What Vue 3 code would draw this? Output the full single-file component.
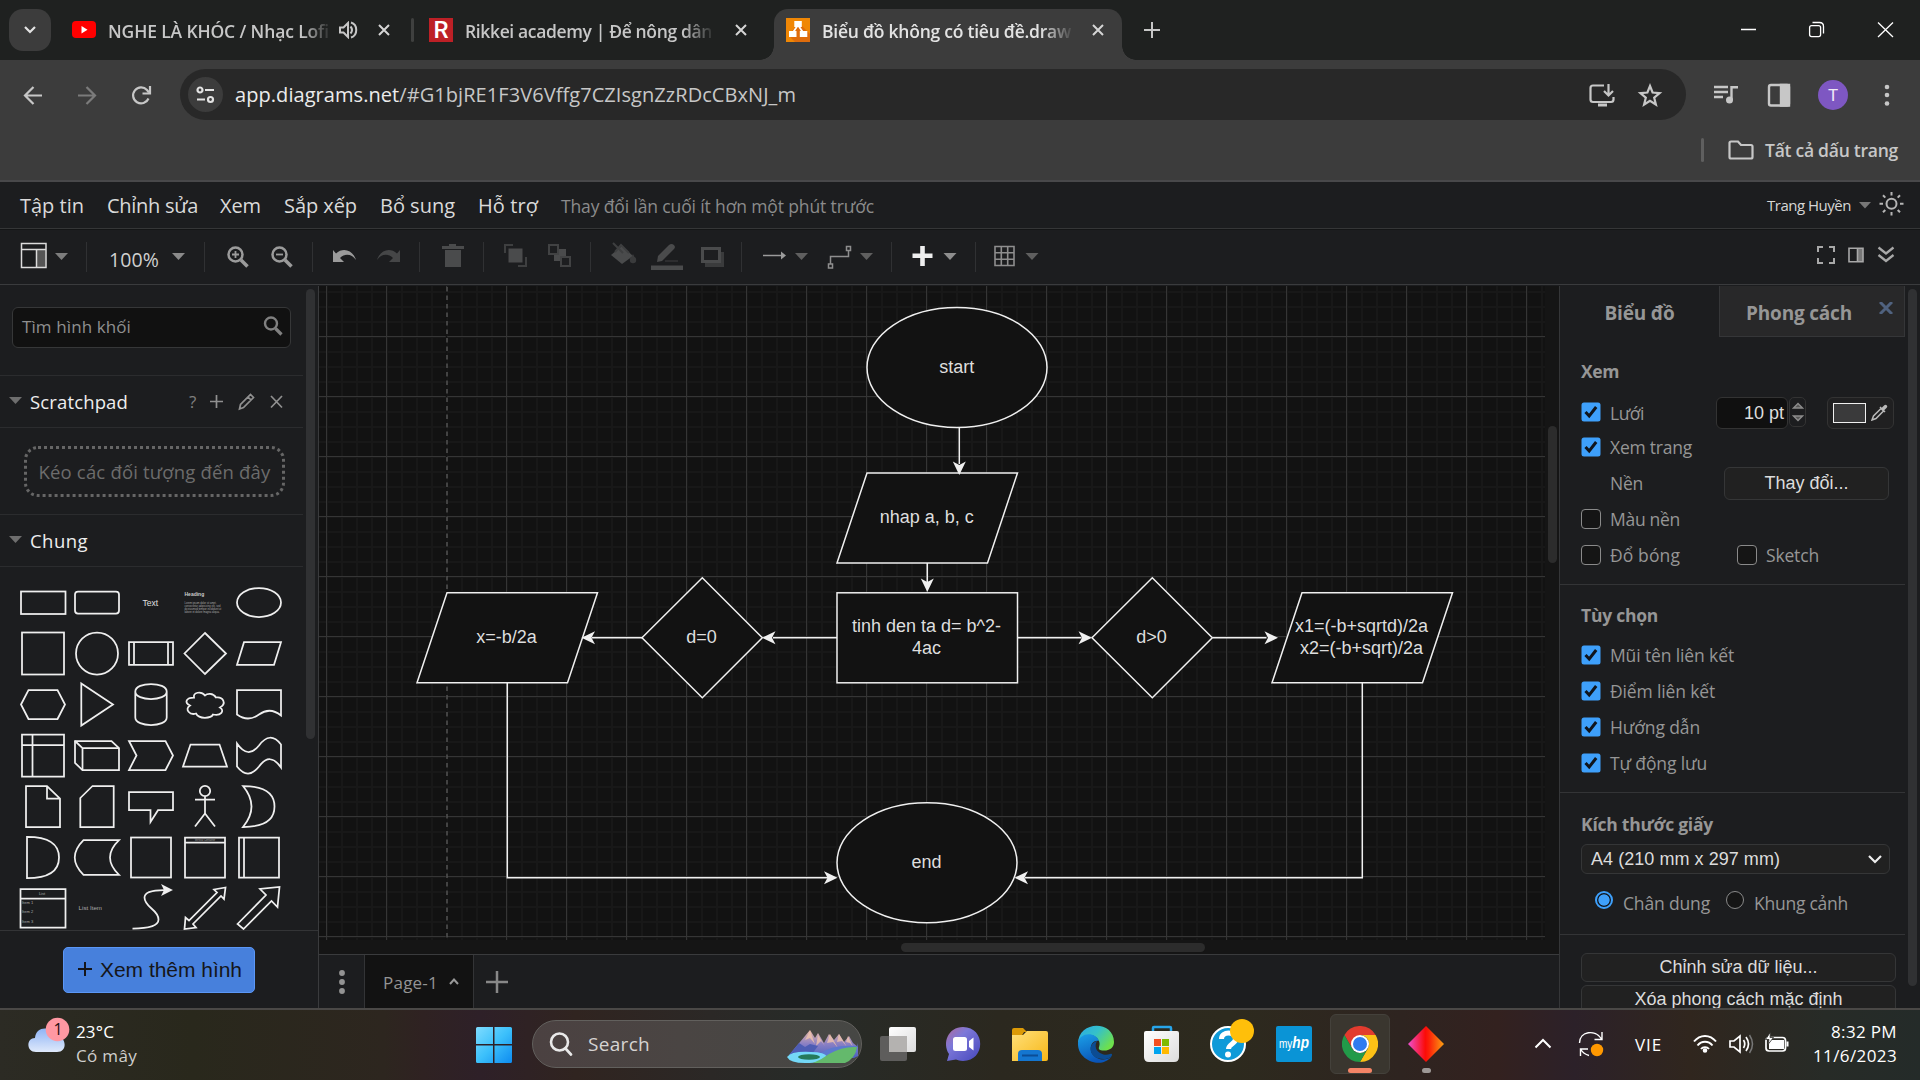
<script setup>
// Spreads the letters of a label so that it fills the given width.
const vFit = {
  mounted(el, { value }) {
    const n = Array.from(el.textContent.trim()).length
    const w = el.getBoundingClientRect().width
    el.style.letterSpacing = (value - w) / n + 'px'
  }
}

const menus = [
  { t: 'Tập tin', w: 64, g: 23 },
  { t: 'Chỉnh sửa', w: 91, g: 22 },
  { t: 'Xem', w: 41, g: 23 },
  { t: 'Sắp xếp', w: 73, g: 23 },
  { t: 'Bổ sung', w: 75, g: 23 },
  { t: 'Hỗ trợ', w: 60, g: 23 }
]

// Each toolbar slot spans [x, x + w); its drawing shares the bar's coordinates.
const tri = (x, c = '#7d7d7d') => `<path d="M${x} 253h13l-6.500 7z" fill="${c}"/>`
const sep = x => `<path d="M${x}.500 242v30" stroke="#303133"/>`
const lens = (x, plus) =>
  `<g fill="none" stroke="#9b9b9b"><circle cx="${x + 8.5}" cy="254.500" r="7" stroke-width="2.500"/><path d="M${x + 14} 260l6.500 6.500" stroke-width="3.500"/><path d="M${x + 5} 254.500h7${plus ? `M${x + 8.5} 251v7` : ''}" stroke-width="1.800"/></g>`
const leftTools = [
  { x: 0, w: 88, g: `<g fill="none" stroke="#dcdcdc" stroke-width="1.500"><rect x="36.500" y="250" width="9" height="17.500" fill="#555" stroke="none"/><rect x="21.500" y="243.500" width="24.500" height="24"/><path d="M21.500 249.500H46M36.500 249.500v18"/></g>` + tri(55) + sep(86) },
  { x: 172, w: 40, g: tri(172, '#8a8a8a') + sep(204) },
  { x: 212, w: 104, g: lens(227, true) + lens(271, false) + sep(312) },
  { x: 316, w: 108, g: `<path d="M333 250v12h11l-4-4c5-5 12-4 16 2-3-10-13-13-20-6.500z" fill="#9b9b9b"/><path d="M400 250v12h-11l4-4c-5-5-12-4-16 2 3-10 13-13 20-6.500z" fill="#454647"/>` + sep(419) },
  { x: 424, w: 60, g: `<path d="M442 246h7v-2h7v2h8v3h-22zM445 250h16v17h-16z" fill="#4a4b4c"/>` + sep(483) },
  { x: 484, w: 108, g: `<rect x="508.500" y="248.500" width="14" height="14" fill="#4a4b4c"/><path d="M513 245h-8v8M526 257v9h-8" fill="none" stroke="#3e3f40" stroke-width="2"/><path d="M554 249h12v12h-12z" fill="#4a4b4c"/><path d="M549 245h9v9h-9zM561 257h9v9h-9z" fill="#1d1e20" stroke="#414243" stroke-width="2"/>` + sep(590) },
  { x: 592, w: 152, g: `<g fill="#4a4b4c"><path d="M622 246l11 10-11 8-11-9z"/><path d="M613 243l10 10M615 252l6-7 8 8" fill="none" stroke="#3e3f40" stroke-width="2"/><circle cx="633" cy="260" r="3.200" fill="#3a3b3c"/><path d="M633 254l2.500 5h-5z" fill="#3a3b3c"/><path d="M657 262l1-6 11-11c3-3 8 1 5 4l-12 12z"/><path d="M665 261h13" stroke="#3e3f40"/><rect x="651" y="265.500" width="32" height="4.500"/><path d="M705 252h19v15h-19z" fill="#3a3b3c"/><rect x="702.500" y="248.500" width="17" height="13" fill="#1d1e20" stroke="#4a4b4c" stroke-width="3"/></g>` + sep(741) },
  { x: 744, w: 150, g: `<path d="M763 255.500h19" stroke="#9b9b9b" stroke-width="1.500"/><path d="M781 251.500l5 4-5 4z" fill="#9b9b9b"/>` + tri(795, '#5f5f5f') + `<path d="M830.500 264v-7.500h18V250M828.500 264h4v4h-4zM846.500 246.500h4v4h-4z" fill="none" stroke="#8e8e8e" stroke-width="1.500"/>` + tri(860, '#5f5f5f') + sep(891) },
  { x: 894, w: 84, g: `<path d="M922.500 246v20M912.500 255.800h20" stroke="#eee" stroke-width="4.600"/>` + tri(943.5, '#8e8e8e') + sep(975) },
  { x: 978, w: 62, g: `<path d="M995 246.500h19v19h-19zM1001.300 246.500v19M1007.700 246.500v19M995 252.800h19M995 259.200h19" fill="none" stroke="#8e8e8e" stroke-width="1.600"/>` + tri(1025.5, '#5f5f5f') }
]

// Palette miniatures, each centred on its own cell.
const poly = p => `<polygon points="${p}"/>`
const tiny = (x, y, s, t, a = 'start') => `<text x="${x}" y="${y}" font-size="${s}" text-anchor="${a}" fill="#aaa" stroke="none">${t}</text>`
const shapes = [
  '<rect x="-22" y="-11" width="44.500" height="22.500"/>',
  '<rect x="-22" y="-11" width="44" height="22" rx="3"/>',
  '<text x="-0.800" y="3" font-size="8.500" text-anchor="middle" fill="#e0e0e0" stroke="none">Text</text>',
  '<text x="-20.500" y="-6.500" font-size="5" font-weight="700" fill="#ccc" stroke="none">Heading</text>' +
    tiny(-20.5, 1, 2.6, 'Lorem ipsum dolor sit amet,') + tiny(-20.5, 4, 2.6, 'consectetur adipisicing elit, sed') + tiny(-20.5, 7, 2.6, 'do eiusmod tempor incididunt ut') + tiny(-20.5, 10.5, 2.6, 'labore et dolore magna aliqua.'),
  '<ellipse rx="22" ry="14.500"/>',
  '<rect x="-21" y="-21" width="42" height="42"/>',
  '<circle r="21"/>',
  '<path d="M-22-11.300H22V11.300H-22zM-17-11.300v22.600M17-11.300v22.600"/>',
  poly('0,-20.500 21,0 0,20.500 -20.500,0'),
  poly('-22,11.300 -15,-11.300 22,-11.300 15,11.300'),
  poly('-22,0 -14.500,-14.500 14.500,-14.500 22,0 14.500,14.500 -14.500,14.500'),
  poly('-15.700,-21 16,0 -15.700,21'),
  '<path d="M-15.700-13v26c0 10 31.400 10 31.400 0v-26c0-10-31.400-10-31.400 0c0 10 31.400 10 31.400 0"/>',
  '<path d="M-11-7C-19-7-21-2-15 1C-21 5-15 11-9 9C-6 15 6 14 8 10C16 12 20 6 15 3C22-1 18-8 11-7C8-12 2-11 0-9C-4-14-12-12-11-7z"/>',
  '<path d="M-22-14.500H22V11Q11 2 0 10Q-11 18-22 10z"/>',
  '<path d="M-21-21h42v42h-42zM-10.500-21v42M-21-10.500h42"/>',
  '<path d="M-22-14.500H14.500L22-7.300V14.700H-14.500L-22 7.500z"/><path d="M-22-14.500L-14.500-7.300H22M-14.500-7.300V14.700"/>',
  poly('-22,-14.500 14.500,-14.500 22,0 14.500,14.500 -22,14.500 -14.500,0'),
  poly('-22,11 -14.500,-11 14.500,-11 22,11'),
  '<path d="M-22-12Q-11 4 0-10Q11-25 22-11V12Q11-4 0 11Q-11 25-22 11z"/>',
  '<path d="M-17-20.500H4L17-8V20.500H-17zM4-20.500V-8H17"/>',
  poly('-16.700,-8.500 -4.500,-20.500 16.700,-20.500 16.700,20.500 -16.700,20.500'),
  poly('-22,-14.500 22,-14.500 22,3.700 7,3.700 -0.500,15.500 -0.500,3.700 -22,3.700'),
  '<circle cy="-15.500" r="5.200"/><path d="M0-10.300V7M-10-7H10M0 7L-10 20M0 7L10 20"/>',
  '<path d="M-16-20.500Q15.500-20.500 15.500 0Q15.500 20.500-16 20.500Q1 0-16-20.500z"/>',
  '<path d="M-16-20.700Q16-20.700 16 0Q16 20.700-16 20.700z"/>',
  '<path d="M22-17.300H-13.500Q-31 0-13.500 17.300H22Q4 0 22-17.300z"/>',
  '<rect x="-20" y="-20" width="40" height="40"/>',
  '<path d="M-20-20h40v40h-40zM-20-15h40"/>' + tiny(0, -16.2, 2.6, 'Vertical Container', 'middle'),
  '<path d="M-20-20h40v40h-40zM-15-20v40"/>',
  '<path d="M-22.500-19.500h45v38.500h-45zM-22.500-10h45"/>' + tiny(-1, -14, 4, 'List', 'middle') + tiny(-21, -4.5, 4, 'Item 1') + tiny(-21, 4.5, 4, 'Item 2') + tiny(-21, 14, 4, 'Item 3'),
  tiny(5, 1.2, 6.2, 'List Item', 'end'),
  '<path d="M-18.500 20C-5 20 7.500 18 7.500 11C7.500 1-6.500-1-6.500-11C-6.500-17 3-18.500 13-18.500"/><path d="M20-18.500L12-22.500L14-18.500L12-14.500z" fill="#f0f0f0"/>',
  poly('-20.500,20.500 -19.500,9 -16,12 12,-16 9,-19 20.500,-21 19,-9.500 16,-12.500 -12,15.500 -9,19'),
  poly('-21.500,15.500 7,-13.500 1,-19.500 20.500,-21.500 18.500,-1.500 12.500,-7.500 -15.500,20.500')
]

const heads = [
  [959.3, 475, 90], [927.3, 592, 90], [762, 637.8, 180], [581.5, 637.8, 180],
  [1092, 637.8, 0], [1278, 637.8, 0], [837.5, 877.8, 0], [1014.5, 877.8, 180]
]
const labels = [
  [956.7, 372.7, 'start'], [926.7, 523.2, 'nhap a, b, c'], [926.5, 632, 'tinh den ta d= b^2-'],
  [926.5, 654, '4ac'], [506.5, 643, 'x=-b/2a'], [701.5, 643, 'd=0'], [1151.5, 643, 'd>0'],
  [1361.5, 632, 'x1=(-b+sqrtd)/2a'], [1361.5, 654, 'x2=(-b+sqrt)/2a'], [926.5, 868, 'end']
]

const options = [
  { t: 'Mũi tên liên kết', w: 124 },
  { t: 'Điểm liên kết', w: 105 },
  { t: 'Hướng dẫn', w: 90 },
  { t: 'Tự động lưu', w: 97 }
]
const tick = 'M4.500 10l3.700 4 7-9'
</script>

<template>
  <div class="screen">
    <!-- Browser tabs -->
    <header class="tabstrip">
      <div class="tabsearch"><svg width="12" height="8" viewBox="0 0 12 8"><path d="M1 1l5 5 5-5" fill="none" stroke="#e3e3e3" stroke-width="2.200" /></svg></div>
      <svg class="yt" width="24" height="18" viewBox="0 0 24 18"><rect width="24" height="17" rx="4" fill="#f00" /><path d="M9.500 5v7.500l6-3.700z" fill="#fff" /></svg>
      <span class="tabtext fade" v-fit="221">NGHE LÀ KHÓC / Nhạc Lofi</span>
      <svg class="audio" width="20" height="18" viewBox="0 0 20 18"><path d="M1 6.500h3.500L9 2v14l-4.500-4.500H1zM11.500 5.500q3 3.500 0 7M12 1.500c7 2 7 13 0 15" fill="none" stroke="#c7c7c7" stroke-width="2" /></svg>
      <svg class="x g19" width="12" height="12" viewBox="0 0 12 12"><path d="M1 1l10 10M11 1L1 11" /></svg>
      <i class="tabsep"></i>
      <span class="rikkei">R</span>
      <span class="tabtext fade" v-fit="247">Rikkei academy | Để nông dân</span>
      <svg class="x g23" width="12" height="12" viewBox="0 0 12 12"><path d="M1 1l10 10M11 1L1 11" /></svg>
      <div class="activetab">
        <svg width="24" height="24" viewBox="0 0 24 24"><path d="M0 0h24v24H0z" fill="#f08705" /><path d="M12 4l12 12v8H9l-6-6z" fill="#df6c0c" /><path d="M12 7L6 16M12 7l6 9" stroke="#fff" stroke-width="1.800" /><path d="M8.300 3h7.500v6H8.300zM3 13h7.500v6H3zM13.800 13h7.500v6h-7.500z" fill="#fff" /></svg>
        <span class="tabtext fade on" v-fit="249">Biểu đồ không có tiêu đề.draw</span>
        <svg class="x g21" width="12" height="12" viewBox="0 0 12 12"><path d="M1 1l10 10M11 1L1 11" /></svg>
      </div>
      <svg class="newtab" width="16" height="16" viewBox="0 0 16 16"><path d="M8 0v16M0 8h16" stroke="#c7c7c7" stroke-width="2" /></svg>
      <svg class="win" width="160" height="20" viewBox="1737 20 160 20"><g fill="none" stroke="#fff" stroke-width="1.300"><path d="M1741 29.500h15M1878 22.500l15 14.500M1893 22.500l-15 14.500M1812.500 22.500h7q4 0 4 4v7" /><rect x="1809.600" y="25.600" width="11" height="11" rx="2" /></g></svg>
    </header>

    <!-- Address bar -->
    <div class="navbar">
      <svg class="nav" width="130" height="24" viewBox="22 82 130 24"><g fill="none" stroke="#c7c7c7" stroke-width="2.200"><path d="M42 94.500H26M33.500 86l-8.500 8.500 8.500 8.500" /><path d="M78 94.500h16M86.500 86l8.500 8.500-8.500 8.500" stroke="#7b7b7b" /><path d="M148.500 97.500a8 8 0 1 1-1.500-8.500l2 2.500" /><path d="M150 85v7.500h-7.500" /></g></svg>
      <div class="omnibox">
        <span class="site"><svg width="20" height="18" viewBox="0 0 20 18"><g fill="none" stroke="#e3e3e3" stroke-width="2.200"><circle cx="4" cy="4" r="2.500" /><path d="M9 4h9M1 13.500h8" /><circle cx="14.500" cy="13.500" r="2.500" /></g></svg></span>
        <span class="url" v-fit="561"><b>app.diagrams.net</b>/#G1bjRE1F3V6Vffg7CZIsgnZzRDcCBxNJ_m</span>
        <svg class="omni-icons" width="76" height="26" viewBox="1588 81 76 26"><g fill="none" stroke="#c7c7c7" stroke-width="2.200"><path d="M1604 84.500h-11q-2.500 0-2.500 2.500v11.500q0 2.500 2.500 2.500h18q2.500 0 2.500-2.500V96M1608.500 83v11M1604 90l4.500 4.500 4.500-4.500" /><path d="M1598 104h9" stroke-width="3" /><path d="M1650 85l2.600 6.500 7 .6-5.400 4.600 1.700 6.800-5.900-3.700-5.900 3.700 1.700-6.800-5.400-4.600 7-.6z" stroke-linejoin="miter" /></g></svg>
      </div>
      <svg class="ext" width="78" height="26" viewBox="1713 81 78 26"><g fill="none" stroke="#c7c7c7" stroke-width="2.400"><path d="M1714 86h14M1714 91h14M1714 96h9M1738 86.200h-6.500V99" /><circle cx="1729.500" cy="99" r="3.500" fill="#c7c7c7" stroke="none" /><rect x="1769" y="84" width="20" height="20.500" rx="2" /><path d="M1781 84h8v20.500h-8z" fill="#c7c7c7" /></g></svg>
      <span class="avatar">T</span>
      <svg class="kebab" width="6" height="24" viewBox="0 0 6 24"><g fill="#c7c7c7"><circle cx="3" cy="4" r="2.300" /><circle cx="3" cy="12" r="2.300" /><circle cx="3" cy="20.500" r="2.300" /></g></svg>
    </div>
    <div class="bookmarks">
      <i></i>
      <svg width="26" height="20" viewBox="0 0 26 20"><path d="M3 1.500h7l3 3.500h10q1.500 0 1.500 1.500v10.500q0 1.500-1.500 1.500H3q-1.500 0-1.500-1.500V3q0-1.500 1.500-1.500z" fill="none" stroke="#c7c7c7" stroke-width="2.200" /></svg>
      <span v-fit="133">Tất cả dấu trang</span>
    </div>

    <!-- Editor menu -->
    <div class="menubar">
      <span v-for="m in menus" :key="m.t" class="menu" v-fit="m.w" :style="{ marginRight: m.g + 'px' }">{{ m.t }}</span>
      <span class="status" v-fit="313">Thay đổi lần cuối ít hơn một phút trước</span>
      <span class="user" v-fit="84">Trang Huyền</span>
      <svg class="usermenu" width="48" height="26" viewBox="1857 191 48 26"><path d="M1859 202h12l-6 6.500z" fill="#777" /><g fill="none" stroke="#b5b5b5" stroke-width="2"><circle cx="1891.500" cy="203.800" r="5" /><path d="M1891.500 192v3.500M1891.500 212v3.500M1879.500 203.800h3.500M1900 203.800h3.500M1883 195.300l2.300 2.300M1897.700 210l2.300 2.300M1900 195.300l-2.300 2.300M1885.300 210l-2.300 2.300" /></g></svg>
    </div>
    <div class="toolbar">
      <svg :width="88" height="55" viewBox="0 229 88 55" v-html="leftTools[0].g"></svg>
      <span class="zoomlevel" v-fit="50">100%</span>
      <svg v-for="s in leftTools.slice(1)" :key="s.x" :width="s.w" height="55" :viewBox="`${s.x} 229 ${s.w} 55`" v-html="s.g"></svg>
      <svg class="view" width="80" height="55" viewBox="1815 229 80 55"><g fill="none" stroke="#a8a8a8" stroke-width="2"><path d="M1818 252v-5h5M1829 247h5v5M1834 258v5h-5M1823 263h-5v-5" /><path d="M1858 248h5v14h-5z" fill="#777" stroke="none" /><path d="M1849 248.200h14v13.600h-14zM1857.500 248v14" stroke-width="1.600" /><path d="M1878.500 247.500l7.500 6 7.500-6M1878.500 255l7.500 6 7.500-6" stroke-width="2.300" /></g></svg>
    </div>

    <main class="main">
      <!-- Shape library -->
      <aside class="sidebar">
        <div class="lib">
          <div class="liblist">
            <div class="searchrow"><div class="search">
              <span v-fit="109">Tìm hình khối</span>
              <svg width="20" height="20" viewBox="0 0 20 20"><g fill="none" stroke="#808080"><circle cx="8" cy="7.500" r="6" stroke-width="2.400" /><path d="M12.500 12.500l6 6" stroke-width="3.200" /></g></svg>
            </div></div>
            <div class="libhead pad">
              <svg class="tri" width="13" height="8" viewBox="0 0 13 8"><path d="M0 0h13L6.500 7z" /></svg>
              <span v-fit="98">Scratchpad</span>
              <em>?</em>
              <svg class="headicons" width="74" height="20" viewBox="209 392 74 20"><g fill="none" stroke="#909090" stroke-width="1.700"><path d="M216.500 395v13M210 401.500h13M271 396l11 11.500M282 396l-11 11.500M239.500 409l1-4.500 10-10 3 3-10 10zM248 397l3 3" /></g></svg>
            </div>
            <div class="drop"><div class="dropbox"><span v-fit="232">Kéo các đối tượng đến đây</span></div></div>
            <div class="libhead chung">
              <svg class="tri" width="13" height="8" viewBox="0 0 13 8"><path d="M0 0h13L6.500 7z" /></svg>
              <span v-fit="58">Chung</span>
            </div>
            <div class="palette">
              <svg v-for="(s, i) in shapes" :key="i" width="54" height="51" viewBox="-27 -25.500 54 51" v-html="s"></svg>
            </div>
          </div>
          <div class="track"><i class="thumb"></i></div>
        </div>
        <div class="more"><button><svg width="14" height="14" viewBox="0 0 14 14"><path d="M7 0v14M0 7h14" stroke="#15161a" stroke-width="2" /></svg><span v-fit="142">Xem thêm hình</span></button></div>
      </aside>

      <!-- Drawing canvas -->
      <section class="center">
        <div class="canvasrow">
          <svg width="1226" height="654" viewBox="319 286 1226 654">
            <defs>
              <pattern id="minor" x="326" y="336" width="15" height="15" patternUnits="userSpaceOnUse"><path d="M0 0h2v15H0zM0 0h15v2H0z" fill="#181818" /></pattern>
              <pattern id="major" x="326" y="336" width="60" height="60" patternUnits="userSpaceOnUse"><path d="M0 0h1v60H0zM0 0h60v1H0z" fill="#353535" /></pattern>
            </defs>
            <rect x="319" y="286" width="1226" height="654" fill="#121212" />
            <rect x="319" y="286" width="1226" height="654" fill="url(#minor)" />
            <rect x="319" y="286" width="1226" height="654" fill="url(#major)" />
            <path d="M446.500 287V940" stroke="#121212" stroke-width="1.500" />
            <path d="M447 287V940" stroke="#5c5c5c" stroke-width="1.300" stroke-dasharray="4.500 4" />
            <g fill="#121212" stroke="#f0f0f0" stroke-width="1.500">
              <ellipse cx="957" cy="367.500" rx="90" ry="60" />
              <path d="M837 563l30-90h150.500l-30 90z" />
              <rect x="837" y="592.800" width="180.500" height="90" />
              <path d="M1092 637.800l60.300-60 60 60-60 60z" />
              <path d="M642 637.800l60.300-60 60 60-60 60z" />
              <path d="M1272 682.800l30-90h150.500l-30 90z" />
              <path d="M417 682.800l30-90h150.500l-30 90z" />
              <ellipse cx="927" cy="862.800" rx="90" ry="60" />
              <path d="M959.300 427.500V464M927.300 563v20M837 637.800h-64M642 637.800h-50M1017.500 637.800h64M1212.500 637.800h54M1362.300 682.800v195H1025M507.300 682.800v195H828" fill="none" />
            </g>
            <path v-for="(h, i) in heads" :key="i" d="M0 0L-13.500-6.500-10 0-13.500 6.500z" fill="#f0f0f0" :transform="`translate(${h[0]} ${h[1]}) rotate(${h[2]})`" />
            <g class="nodetext"><text v-for="l in labels" :key="l[2]" :x="l[0]" :y="l[1]">{{ l[2] }}</text></g>
          </svg>
          <div class="vtrack"><i></i></div>
        </div>
        <div class="htrack"><i></i></div>
        <footer class="pages">
          <span class="pmenu"><svg width="6" height="24" viewBox="0 0 6 24"><g fill="#939393"><circle cx="3" cy="3" r="2.900" /><circle cx="3" cy="12" r="2.900" /><circle cx="3" cy="21" r="2.900" /></g></svg></span>
          <span class="ptab"><span v-fit="55">Page-1</span><svg width="10" height="7" viewBox="0 0 10 7"><path d="M1 6l4-4.500L9 6" fill="none" stroke="#999" stroke-width="2" /></svg></span>
          <svg class="padd" width="22" height="22" viewBox="0 0 22 22"><path d="M11 0v22M0 11h22" stroke="#888" stroke-width="2.500" /></svg>
        </footer>
      </section>

      <!-- Format panel -->
      <aside class="format">
        <div class="fbody">
          <div class="ftabs">
            <span class="ft cur"><span v-fit="70">Biểu đồ</span></span>
            <span class="ft"><span v-fit="106">Phong cách</span></span>
            <span class="fx"><svg width="14" height="12" viewBox="0 0 14 12"><path d="M1 0l12 12M13 0L1 12" stroke="#50627f" stroke-width="3" /></svg></span>
          </div>
          <div class="sec view-sec">
            <h3><span v-fit="38">Xem</span></h3>
            <div class="row r1">
              <svg class="cb" width="20" height="20" viewBox="0 0 20 20"><rect x=".5" y=".5" width="19" height="19" rx="2.500" /><path :d="tick" /></svg>
              <span class="lab" v-fit="34">Lưới</span>
              <span class="num"><span v-fit="40">10 pt</span></span>
              <span class="spin"><svg width="12" height="22" viewBox="0 0 12 22"><path d="M1.500 7L6 2.500 10.500 7zM1.500 15L6 19.500 10.500 15z" fill="#555" stroke="#8c8c8c" stroke-width="1.300" /></svg></span>
              <span class="color"><i></i><svg width="17" height="17" viewBox="0 0 17 17"><g fill="none" stroke="#b9b9b9" stroke-width="1.500"><path d="M1 16l1.500-4L10 4.500 12.500 7 5 14.500zM9 3l5 5" /><path d="M12.500 4.500l2-2" stroke-width="3.400" stroke-linecap="round" /></g></svg></span>
            </div>
            <div class="row r2">
              <svg class="cb" width="20" height="20" viewBox="0 0 20 20"><rect x=".5" y=".5" width="19" height="19" rx="2.500" /><path :d="tick" /></svg>
              <span class="lab" v-fit="82">Xem trang</span>
            </div>
            <div class="row r3"><span class="lab nen" v-fit="33">Nền</span><span class="btn change"><span v-fit="84">Thay đổi...</span></span></div>
            <div class="row r4"><i class="off"></i><span class="lab" v-fit="70">Màu nền</span></div>
            <div class="row r5"><i class="off"></i><span class="lab" v-fit="70">Đổ bóng</span><i class="off second"></i><span class="lab" v-fit="53">Sketch</span></div>
          </div>
          <div class="sec opt-sec">
            <h3><span v-fit="77">Tùy chọn</span></h3>
            <div v-for="o in options" :key="o.t" class="row opt">
              <svg class="cb" width="20" height="20" viewBox="0 0 20 20"><rect x=".5" y=".5" width="19" height="19" rx="2.500" /><path :d="tick" /></svg>
              <span class="lab" v-fit="o.w">{{ o.t }}</span>
            </div>
          </div>
          <div class="sec paper-sec">
            <h3><span v-fit="132">Kích thước giấy</span></h3>
            <div class="select"><span v-fit="189">A4 (210 mm x 297 mm)</span><svg width="14" height="10" viewBox="0 0 14 10"><path d="M1 2l6 6 6-6" fill="none" stroke="#eee" stroke-width="2.200" /></svg></div>
            <div class="radios">
              <i class="radio sel"></i><span class="lab" v-fit="87">Chân dung</span>
              <i class="radio"></i><span class="lab" v-fit="94">Khung cảnh</span>
            </div>
          </div>
          <div class="btns">
            <span class="btn wide"><span v-fit="158">Chỉnh sửa dữ liệu...</span></span>
            <span class="btn wide"><span v-fit="208">Xóa phong cách mặc định</span></span>
          </div>
        </div>
        <div class="track ftrack"><i class="thumb"></i></div>
      </aside>
    </main>

    <!-- Desktop taskbar -->
    <footer class="taskbar">
      <svg class="weather" width="44" height="40" viewBox="28 1016 44 40">
        <defs><linearGradient id="cl" x1="0" y1="0" x2="0" y2="1"><stop offset="0" stop-color="#8fb4f5" /><stop offset="1" stop-color="#dfe9fb" /></linearGradient></defs>
        <path d="M36 1052c-10 0-10-14-1-14 1-12 16-12 19-3 12-1 15 17 3 17z" fill="url(#cl)" />
        <circle cx="57.500" cy="1029.500" r="11.800" fill="#ff98a2" /><text x="58" y="1035" font-size="16" text-anchor="middle" fill="#1c1010">1</text>
      </svg>
      <div class="wtext"><span v-fit="38">23°C</span><span class="dim" v-fit="61">Có mây</span></div>
      <svg class="start" width="36" height="36" viewBox="0 0 36 36"><defs><linearGradient id="wn" x1="0" y1="0" x2="1" y2="1"><stop offset="0" stop-color="#7fdcff" /><stop offset=".5" stop-color="#3cc0fb" /><stop offset="1" stop-color="#0d8bf0" /></linearGradient></defs><path d="M1.500 0H17v17H0V1.500Q0 0 1.500 0zM18.500 0H34.500Q36 0 36 1.500V17H18.500zM0 18.500h17V36H1.500Q0 36 0 34.500zM18.500 18.500H36V34.500Q36 36 34.500 36h-16z" fill="url(#wn)" /></svg>
      <div class="tsearch">
        <svg width="24" height="24" viewBox="0 0 24 24"><g fill="none" stroke="#e9e9e9" stroke-width="2.600"><circle cx="10.500" cy="10" r="8.500" /><path d="M16.500 16.500l5.500 6" stroke-linecap="round" /></g></svg>
        <span v-fit="62">Search</span>
        <svg class="pic" width="72" height="33" viewBox="0 0 72 33">
          <defs><linearGradient id="mt" x1="0" y1="0" x2="0" y2="1"><stop offset="0" stop-color="#e8b9a6" /><stop offset=".5" stop-color="#8a7fc4" /><stop offset="1" stop-color="#4b62c0" /></linearGradient></defs>
          <path d="M2 25L13 12l5-6 5-6 5 8 3-5 6 10 5-9 5 6 5-6 5 8 5-6 4 7 5 4v9l-4 2H24z" fill="url(#mt)" />
          <path d="M23 1l-5 9 5-2 5 6zM31 5l-2 11 5-5 4 5zM43 4l-3 9 6-1 5 6zM52 4l-2 8 5-1 5 6zM61 6l-2 6 4 1 3 4z" fill="#f3c6ac" opacity=".75" />
          <path d="M12 13L3 24h22l6-8-8-2-5 3z" fill="#4e5db4" />
          <path d="M32 24q14-10 38-8l1-3-1 9-20 10H12z" fill="#5c78cf" />
          <path d="M0 27q4-6 24-5 14 0 16 5-4 6-22 6Q3 33 0 27z" fill="#74d8f7" />
          <path d="M26 33q8-3 16-9 14-8 28-7-2 12-12 16z" fill="#64b96c" /><ellipse cx="22" cy="27" rx="11" ry="2.800" fill="#257a5a" />
        </svg>
      </div>
      <svg class="apps" width="466" height="56" viewBox="864 1017 466 56">
        <defs>
          <linearGradient id="tv" x1="0" y1="0" x2="1" y2="1"><stop offset="0" stop-color="#fff" /><stop offset="1" stop-color="#dcdcdc" /></linearGradient>
          <linearGradient id="ch" x1="0" y1="0" x2="1" y2="1"><stop offset="0" stop-color="#b06a9b" /><stop offset=".35" stop-color="#7d78d8" /><stop offset="1" stop-color="#4547bd" /></linearGradient>
          <linearGradient id="fo" x1="0" y1="0" x2="1" y2="1"><stop offset="0" stop-color="#ffe07a" /><stop offset="1" stop-color="#f7b718" /></linearGradient>
          <linearGradient id="ed" x1="0" y1="0" x2="1" y2=".6"><stop offset="0" stop-color="#2aa8e6" /><stop offset=".5" stop-color="#35c1c9" /><stop offset="1" stop-color="#6ee04c" /></linearGradient>
          <linearGradient id="eb" x1="0" y1="0" x2=".4" y2="1"><stop offset="0" stop-color="#1ba0e8" /><stop offset="1" stop-color="#0a55b8" /></linearGradient>
        </defs>
        <rect x="880" y="1036" width="27" height="25" rx="2" fill="#5e5d5c" /><rect x="889" y="1027" width="27" height="25" rx="2" fill="url(#tv)" /><path d="M889 1036h18v16h-18z" fill="#b4b2b0" />
        <path d="M963 1027c23 0 23 34 0 34-3 0-5-1-7-1.500l-9 1.500 2-7c-7-11-1-27 14-27z" fill="url(#ch)" /><rect x="953" y="1037" width="14" height="14" rx="2.500" fill="#fff" /><path d="M969 1041l4.500-3.500v13L969 1047z" fill="#fff" />
        <path d="M1012 1030q0-2 2-2h9l4 4h-3l-3 5h-9z" fill="#dc9a06" /><path d="M1012 1035h11l4-4h19q2 0 2 2v26q0 2-2 2h-34z" fill="url(#fo)" /><path d="M1018 1061v-7q0-4 4-4h16q4 0 4 4v7z" fill="#1476d0" /><path d="M1022 1055.500h16" stroke="#0b4d96" stroke-width="2" />
        <path d="M1078 1044c0-24 36-24 36-2 0 7-7 10-14 8-3-2 1-4-1-9-4-9-17-7-21 3z" fill="url(#ed)" /><path d="M1078 1044c0-12 18-13 21-3-9-2-12 12-2 17 6 3 11 1 14-1-9 12-33 4-33-13z" fill="url(#eb)" /><path d="M1097 1041c-8 2-9 13 0 17 6 2 11 1 14-1 2-3 1-4-1-3-8 3-18-4-13-13z" fill="#0c4c93" />
        <path d="M1153 1033v-5q0-1 1-1h16q1 0 1 1v5" fill="none" stroke="#27a5ea" stroke-width="2.500" /><path d="M1146 1031h31q2 0 2 2v24q0 5-5 5h-25q-5 0-5-5v-24q0-2 2-2z" fill="url(#tv)" /><path d="M1154 1039h7v7h-7z" fill="#f25022" /><path d="M1162 1039h7v7h-7z" fill="#7fba00" /><path d="M1154 1047h7v7h-7z" fill="#00a4ef" /><path d="M1162 1047h7v7h-7z" fill="#ffb900" />
        <circle cx="1228" cy="1044" r="17" fill="#0e9ad8" stroke="#fff" stroke-width="2" /><path d="M1221.500 1039c0-8 14-8 14 0 0 5-7 5-7 10" fill="none" stroke="#fff" stroke-width="5" /><circle cx="1228" cy="1054.500" r="3" fill="#fff" /><circle cx="1242" cy="1031" r="12" fill="#ffbf0a" />
        <rect x="1276" y="1026" width="36" height="36" rx="2" fill="#0a94d6" /><text x="1279" y="1048" font-size="12.500" fill="#fff" textLength="30" lengthAdjust="spacingAndGlyphs">my<tspan font-size="17" font-weight="700" font-style="italic">hp</tspan></text>
      </svg>
      <div class="chromecell">
        <svg width="36" height="36" viewBox="0 0 36 36"><path d="M2.400 9A18 18 0 0 1 33.600 9H18L10.200 22.500z" fill="#e23b2e" /><path d="M33.600 9A18 18 0 0 1 18 36l7.800-13.500A9 9 0 0 0 18 9z" fill="#fbc016" /><path d="M18 36A18 18 0 0 1 2.400 9l7.800 13.500A9 9 0 0 0 25.800 22.500z" fill="#229a49" /><circle cx="18" cy="18" r="9" fill="#fff" /><circle cx="18" cy="18" r="7" fill="#2f7bef" /></svg>
        <i></i>
      </div>
      <div class="diamond">
        <svg width="36" height="36" viewBox="0 0 36 36"><defs><linearGradient id="dm"><stop offset="0" stop-color="#ee4fd0" /><stop offset=".48" stop-color="#fb0b08" /><stop offset=".58" stop-color="#fb1f08" /><stop offset="1" stop-color="#fba012" /></linearGradient></defs><path d="M18 0l18 18-18 18L0 18z" fill="url(#dm)" /></svg>
        <i></i>
      </div>
      <svg class="tray1" width="72" height="30" viewBox="1533 1029 72 30"><g fill="none" stroke="#fff" stroke-width="2"><path d="M1535.500 1047.500l7.500-7.500 7.500 7.500" /><path d="M1579.500 1043c0-12 16-14 22-4M1602 1032v7.500h-7.500M1589 1055.500c-4-1-7-4-8.500-6.500M1580.500 1056v-7h7.500" stroke-width="1.400" /></g><circle cx="1597" cy="1050" r="6.200" fill="#ff9800" /></svg>
      <span class="lang" v-fit="27">VIE</span>
      <svg class="tray2" width="100" height="24" viewBox="1691 1031 100 24"><g fill="none" stroke="#fff" stroke-width="2"><path d="M1694 1041.500c6-7.500 16-7.500 22 0M1697.500 1045.500c4-5 11-5 15 0M1701 1049c2-2.500 6-2.500 8 0" /><circle cx="1705" cy="1050.500" r="1.300" fill="#fff" /><path d="M1730 1041h4l6-5v16l-6-5h-4zM1743.500 1040q2.500 4 0 8M1746 1037q5 7 0 14" stroke-width="1.700" /><path d="M1749.500 1035q6 9 0 18" stroke="#777" stroke-width="1.500" /><rect x="1766" y="1037.500" width="19.500" height="13.500" rx="3" stroke-width="1.700" /><path d="M1770 1041h13v7h-13zM1787.500 1041.500v5" fill="#fff" /><path d="M1770.500 1032l-5 7.500h3.500l-1 5 5.500-7h-3.500z" fill="#fff" stroke="#2a2a26" stroke-width=".8" /></g></svg>
      <div class="clock"><span v-fit="66">8:32 PM</span><span v-fit="84">11/6/2023</span></div>
    </footer>
  </div>
</template>

<style>
body { margin: 0; background: #1c1d1f; overflow: hidden; }
</style>

<style scoped>
.screen { width: 1920px; height: 1080px; display: flex; flex-direction: column; overflow: hidden; font-family: "Open Sans", "Noto Sans", sans-serif; font-size: 17.500px; color: #ddd; background: #1c1d1f; }
span { white-space: nowrap; flex: none; }
svg { flex: none; display: block; }

.tabstrip { height: 60px; flex: none; background: #1f2120; display: flex; align-items: center; box-sizing: border-box; padding-left: 9px; }
.tabsearch { width: 42px; height: 42px; border-radius: 14px; background: #3c3c3c; display: flex; align-items: center; justify-content: center; }
.yt { margin-left: 21px; }
.tabtext { display: block; margin-left: 12px; font-weight: 600; color: #c7c7c7; line-height: 28px; padding-top: 2px; }
.tabtext.on { color: #e3e3e3; }
.fade { -webkit-mask-image: linear-gradient(90deg, #000 88%, rgba(0, 0, 0, .1)); mask-image: linear-gradient(90deg, #000 88%, rgba(0, 0, 0, .1)); }
.audio { margin-left: 10px; }
.x path { stroke: #d5d5d5; stroke-width: 2; }
.g19 { margin-left: 19px; }
.g23 { margin-left: 23px; }
.g21 { margin-left: 21px; }
.tabsep { width: 3px; height: 24px; background: #3f403f; border-radius: 2px; margin-left: 21px; }
.rikkei { margin-left: 15px; width: 24px; height: 24px; background: #bd2026; color: #fff; font: 500 24px/24px "Roboto", sans-serif; text-align: center; }
.activetab { position: relative; align-self: flex-end; margin-left: 27px; box-sizing: border-box; width: 348px; height: 51px; padding: 0 0 9px 12px; display: flex; align-items: center; background: #3c3c3c; border-radius: 14px 14px 0 0; }
.activetab::before, .activetab::after { content: ""; position: absolute; bottom: 0; width: 14px; height: 14px; }
.activetab::before { left: -14px; background: radial-gradient(circle at 0 0, transparent 13.500px, #3c3c3c 14px); }
.activetab::after { right: -14px; background: radial-gradient(circle at 100% 0, transparent 13.500px, #3c3c3c 14px); }
.newtab { margin-left: 22px; }
.win { margin-left: auto; margin-right: 23px; }

.navbar { height: 70px; flex: none; background: #3c3c3c; display: flex; align-items: center; padding-bottom: 1px; box-sizing: border-box; }
.nav { margin-left: 22px; }
.omnibox { margin-left: 28px; width: 1506px; height: 51px; border-radius: 26px; background: #282828; display: flex; align-items: center; }
.site { margin-left: 8px; width: 35px; height: 35px; border-radius: 50%; background: #3c3c3c; display: flex; align-items: center; justify-content: center; }
.url { display: block; margin: -1px 0 0 12px; font-size: 20px; color: #c7c7c7; }
.url b { font-weight: 400; color: #ececec; }
.omni-icons { margin-left: auto; margin-right: 22px; }
.ext { margin-left: 27px; }
.avatar { margin-left: 27px; width: 30px; height: 30px; border-radius: 50%; background: #7e57c2; color: #f0eaf8; font: 17px/30px "Roboto", sans-serif; text-align: center; }
.kebab { margin-left: 36px; }
.bookmarks { flex: none; background: #3c3c3c; border-bottom: 2px solid #48484a; display: flex; align-items: center; justify-content: flex-end; box-sizing: border-box; height: 52px; padding: 0 22px 10px 0; }
.bookmarks i { width: 3px; height: 24px; border-radius: 2px; background: #5f5f5f; margin-right: 24px; }
.bookmarks svg { margin-right: 11px; }
.bookmarks span { font-weight: 600; color: #c7c7c7; margin-top: -1px; }

.menubar { height: 47px; flex: none; box-sizing: border-box; display: flex; align-items: center; padding: 1px 0 0 20px; border-bottom: 1px solid #353637; box-shadow: 0 1px 0 #141516; }
.menu { font-size: 20px; color: #dadada; }
.status { font-size: 17.500px; color: #8b8b8b; }
.user { margin-left: auto; font-size: 15px; color: #d6d6d6; margin-top: -1px; }
.usermenu { margin: -3px 15px 0 6px; }
.toolbar { height: 56px; margin-bottom: 1px; flex: none; box-sizing: border-box; border-bottom: 1px solid #3a3b3d; display: flex; align-items: flex-start; }
.zoomlevel { margin: 17px 13px 0 21px; font-size: 19.500px; line-height: 28px; color: #d0d0d0; }
.view { margin-left: auto; margin-right: 25px; }

.main { height: 722px; flex: none; display: flex; overflow: hidden; border-bottom: 2px solid #4a4846; }
.sidebar { width: 318px; border-right: 1px solid #3a3b3d; display: flex; flex-direction: column; flex: none; }
.lib { display: flex; height: 644px; overflow: hidden; flex: none; }
.liblist { width: 303px; flex: none; overflow: hidden; }
.searchrow { height: 90px; box-sizing: border-box; padding: 21px 0 0 12px; border-bottom: 1px solid #2b2c2e; }
.search { width: 279px; height: 41px; box-sizing: border-box; border: 1px solid #363738; border-radius: 6px; background: #111; display: flex; align-items: center; justify-content: space-between; padding: 0 7px 2px 9px; font-size: 17px; color: #8f8f8f; }
.search svg { margin-top: -1px; }
.libhead { display: flex; align-items: center; height: 51px; border-bottom: 1px solid #2b2c2e; padding-left: 9px; color: #eee; font-size: 18.500px; }
.tri { fill: #6e6e6e; margin-right: 8px; margin-top: -2px; }
.libhead em { font-style: normal; font-size: 17px; color: #808080; margin-left: 61px; width: 20px; }
.drop { height: 87px; box-sizing: border-box; border-bottom: 1px solid #2b2c2e; padding: 18px 0 0 24px; }
.dropbox { width: 261px; height: 51px; box-sizing: border-box; border: 3px dotted #666; border-radius: 14px; display: flex; align-items: center; justify-content: center; color: #6c6c6c; font-size: 18.500px; }
.palette { margin: 10px 0 0 16px; width: 270px; display: grid; grid-template-columns: repeat(5, 54px); grid-auto-rows: 51px; }
.palette svg { fill: none; stroke: #efefef; stroke-width: 1.750px; font-family: "Liberation Sans", Arial, sans-serif; }
.track { width: 15px; padding: 3px 0 0 3px; box-sizing: border-box; }
.thumb { display: block; width: 9px; height: 450px; border-radius: 5px; background: #303133; }
.more { flex: 1; border-top: 1px solid #333436; display: flex; padding: 16px 0 0 63px; }
.more button { width: 192px; height: 46px; box-sizing: border-box; border: 1px solid #5b97f6; border-radius: 5px; background: #4780dc; display: flex; align-items: center; padding: 0 0 0 14px; font: 21px "Liberation Sans", Arial, sans-serif; color: #15161a; }
.more button svg { margin: -2px 8px 0 0; }

.center { width: 1240px; flex: none; display: flex; flex-direction: column; background: #151515; border-right: 1px solid #353638; }
.canvasrow { display: flex; height: 654px; }
.nodetext { font: 18px "Liberation Sans", Arial, sans-serif; fill: #dedede; text-anchor: middle; }
.vtrack { padding: 140px 0 0 3px; }
.vtrack i { display: block; width: 9px; height: 137px; border-radius: 5px; background: #2c2c2c; }
.htrack { height: 14px; box-sizing: border-box; padding: 3px 0 0 582px; }
.htrack i { display: block; width: 304px; height: 9px; border-radius: 5px; background: #2c2c2c; }
.pages { flex: 1; border-top: 1px solid #3a3b3d; background: #1c1d1f; display: flex; align-items: stretch; }
.pmenu { width: 45px; display: flex; align-items: center; justify-content: center; }
.ptab { width: 110px; box-sizing: border-box; border: solid #333436; border-width: 0 1px; background: #121212; display: flex; align-items: center; padding: 2px 0 0 18px; font-size: 17px; color: #949494; }
.ptab svg { margin: -3px 0 0 11px; }
.padd { margin: 16px 0 0 12px; }

.format { width: 360px; flex: none; display: flex; font-size: 17.500px; color: #969696; }
.fbody { width: 345px; flex: none; }
.ftabs { height: 51px; display: flex; }
.ft { width: 148px; box-sizing: border-box; display: flex; justify-content: center; align-items: center; background: #282829; border: solid #353638; border-width: 0 0 1px 1px; padding: 3px 0 0 11px; font-weight: 700; font-size: 19px; }
.ft.cur { width: 159px; background: none; border: 0; padding: 3px 0 0 0; }
.fx { width: 38px; box-sizing: border-box; background: #282829; border: solid #353638; border-width: 0 1px 1px 0; display: flex; justify-content: center; padding-top: 16px; }
h3 { margin: 0; font-size: 17.500px; line-height: 26px; font-weight: 700; display: flex; }
.sec { border-bottom: 1px solid #333436; padding-left: 21px; box-sizing: border-box; }
.row { display: flex; align-items: center; }
.cb { margin-right: 9px; }
.cb rect { fill: #3ea0fb; }
.cb path { fill: none; stroke: #10151c; stroke-width: 3; }
.off { width: 20px; height: 20px; box-sizing: border-box; border: 1.500px solid #8a8a8a; border-radius: 4px; background: #151515; margin-right: 9px; }
.lab { display: block; line-height: 24px; }
.view-sec { height: 248px; padding-top: 21px; }
.r1 { height: 36px; margin-top: 10px; }
.r1 .lab { margin-right: 72px; padding-top: 2px; }
.num { width: 72px; height: 32px; box-sizing: border-box; border: 1px solid #333; border-radius: 6px; background: #101010; display: flex; align-items: center; justify-content: flex-end; padding-right: 3px; margin-top: 2px; font: 18px "Liberation Sans", Arial, sans-serif; color: #ddd; }
.spin { width: 17px; height: 30px; margin-left: 1px; box-sizing: border-box; border: 1px solid #333; border-radius: 5px; display: flex; align-items: center; justify-content: center; }
.color { width: 67px; height: 32px; margin: 1px 0 0 21px; box-sizing: border-box; border: 1px solid #333; border-radius: 6px; background: #202021; display: flex; align-items: center; padding-left: 5px; }
.color i { width: 33px; height: 20px; box-sizing: border-box; border: 1px solid #f0f0f0; background: #3a3a3b; margin-right: 5px; }
.r2 { height: 30px; margin-top: 2px; }
.r3 { height: 34px; margin-top: 4px; }
.nen { margin: 0 81px 0 29px; }
.r4 { height: 36px; margin-top: 1px; }
.r5 { height: 36px; }
.second { margin-left: 57px; }
.btn { box-sizing: border-box; border: 1px solid #353637; border-radius: 6px; background: #212121; display: flex; align-items: center; justify-content: center; font: 18px "Liberation Sans", Arial, sans-serif; color: #dcdcdc; }
.change { width: 165px; height: 33px; }
.opt-sec { height: 208px; padding-top: 17px; }
.opt-sec h3 { margin-bottom: 9px; }
.opt { height: 36px; }
.paper-sec { height: 142px; padding-top: 18px; }
.select { width: 309px; height: 30px; margin-top: 7px; box-sizing: border-box; border: 1px solid #353637; border-radius: 6px; background: #212121; display: flex; align-items: center; justify-content: space-between; padding: 0 7px 0 9px; font: 18px "Liberation Sans", Arial, sans-serif; color: #dcdcdc; }
.radios { display: flex; padding: 17px 0 0 14px; }
.radio { width: 18px; height: 18px; box-sizing: border-box; border: 1.500px solid #8a8a8a; border-radius: 50%; background: #151515; }
.radio.sel { border: 2px solid #3ea0fb; background: radial-gradient(circle, #3ea0fb 5.200px, #121820 6px); }
.radios .lab { margin: 0 16px 0 10px; }
.btns { padding: 18px 0 0 21px; display: flex; flex-direction: column; gap: 3px; }
.wide { width: 315px; height: 29px; }
.ftrack .thumb { height: 697px; }

.taskbar { height: 70px; flex: none; display: flex; align-items: flex-start; color: #fff; font-size: 17px; background: linear-gradient(90deg, #2c2b24, #29281c 10%, #2d261f 20%, #2f2222 22%, #2e2028 25%, #302420 30%, #2b2826 37%, #272b28 42%, #2b281f 52%, #2d2a1e 64%, #2e2420 73%, #33211f 78%, #2c2129 82%, #30261e 88%, #272b27 95%, #242b29); }
.weather { margin: 6px 0 0 28px; }
.wtext { width: 80px; margin: 10px 0 0 4px; display: flex; flex-direction: column; align-items: flex-start; }
.wtext span { line-height: 24px; }
.wtext .dim { color: #cfcfcd; }
.start { margin: 17px 0 0 320px; }
.tsearch { width: 330px; height: 48px; margin: 10px 0 0 20px; box-sizing: border-box; border: 1.500px solid #62605d; border-radius: 24px; background: linear-gradient(90deg, #4b4141, #4a4543 45%, #464744); display: flex; align-items: center; padding-left: 16px; font-size: 19px; color: #d6d4d2; }
.tsearch span { margin-left: 15px; }
.pic { margin: 4px 0 0 auto; margin-right: 2px; }
.apps { margin: 7px 0 0 2px; font-family: "Liberation Sans", Arial, sans-serif; }
.chromecell { width: 60px; height: 60px; margin: 4px 0 0 0; box-sizing: border-box; border: 1px solid #44413b; border-radius: 6px; background: #3a362f; display: flex; flex-direction: column; align-items: center; padding-top: 11px; }
.chromecell i { width: 24px; height: 5px; border-radius: 3px; background: #f58466; margin-top: 6px; }
.diamond { margin: 16px 0 0 18px; display: flex; flex-direction: column; align-items: center; }
.diamond i { width: 9px; height: 5px; border-radius: 3px; background: #9d9896; margin-top: 6px; }
.tray1 { margin: 19px 0 0 89px; }
.lang { margin: 23px 0 0 30px; line-height: 24px; }
.tray2 { margin: 21px 0 0 29px; }
.clock { margin: 10px 23px 0 auto; display: flex; flex-direction: column; align-items: flex-end; }
.clock span { line-height: 24px; }
</style>
